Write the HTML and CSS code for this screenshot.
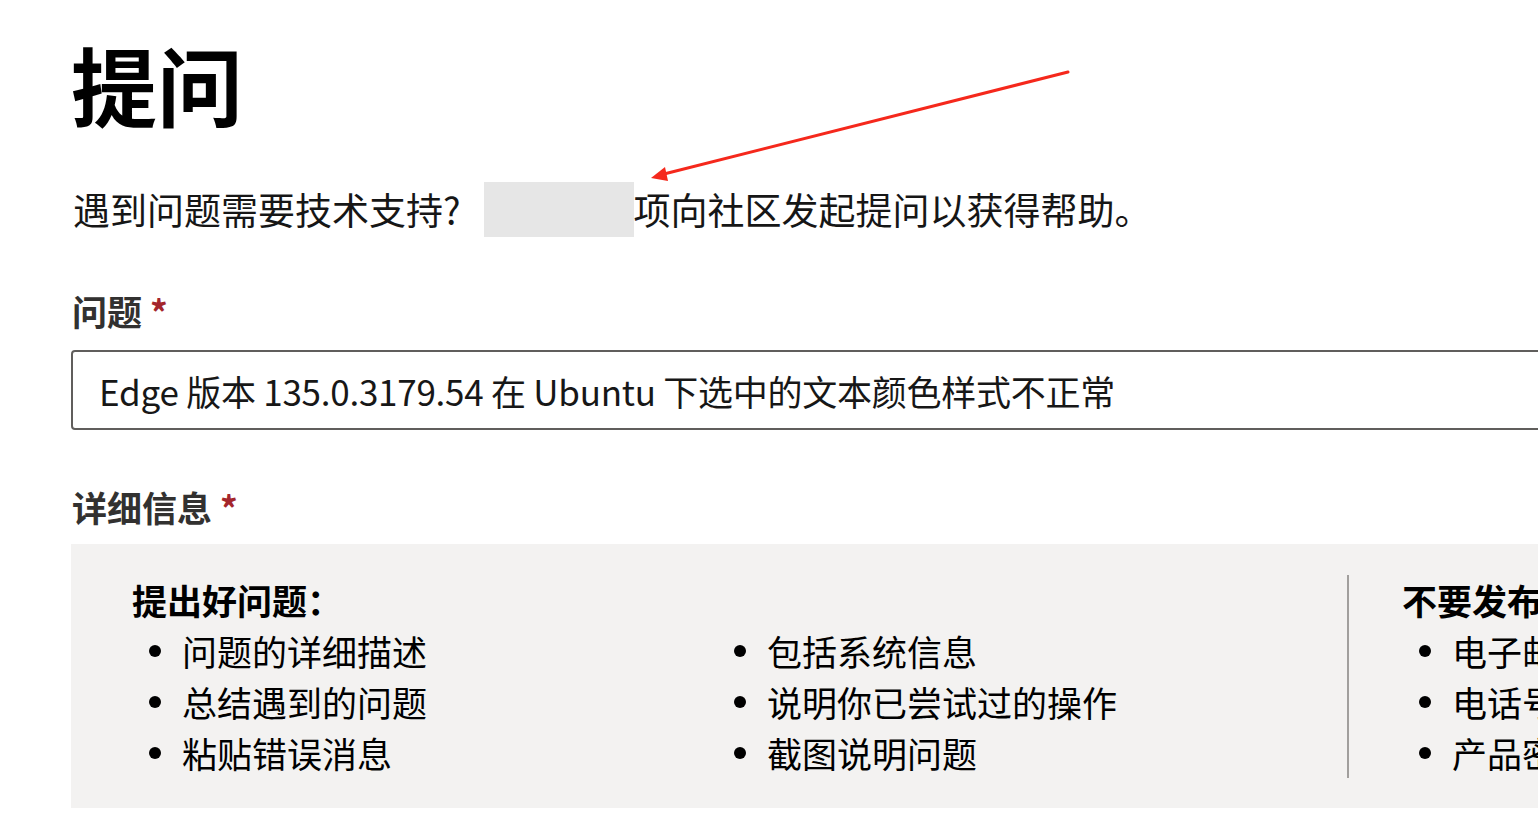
FILE: index.html
```html
<!DOCTYPE html>
<html lang="zh-CN">

<head>
 <meta charset="UTF-8">
 <meta name="viewport" content="width=device-width">
 <title>提问</title>
 <link rel="stylesheet" href="styles.css">
</head>

<body>

 <main class="page">

  <h1 class="page-title">提问</h1>

  <p class="intro">遇到问题需要技术支持?<span class="redacted"></span>项向社区发起提问以获得帮助。</p>

  <form class="ask-form">

   <label class="field-label" for="titulo">问题 <span class="required">*</span></label>
   <input id="titulo" class="text-input" value="Edge 版本 135.0.3179.54 在 Ubuntu 下选中的文本颜色样式不正常">

   <div class="field-label">详细信息 <span class="required">*</span></div>

   <div class="tips">
    <section class="tips-good">
     <h2 class="tips-title">提出好问题：</h2>
     <div class="tips-columns">
      <ul class="tips-list">
       <li>问题的详细描述</li>
       <li>总结遇到的问题</li>
       <li>粘贴错误消息</li>
      </ul>
      <ul class="tips-list">
       <li>包括系统信息</li>
       <li>说明你已尝试过的操作</li>
       <li>截图说明问题</li>
      </ul>
     </div>
    </section>
    <section class="tips-bad">
     <h2 class="tips-title">不要发布个人信息：</h2>
     <ul class="tips-list">
      <li>电子邮件地址</li>
      <li>电话号码</li>
      <li>产品密钥</li>
     </ul>
    </section>
   </div>

  </form>

 </main>

 <!-- Flecha roja de la anotación -->
 <svg class="annotation" width="1538" height="832" viewBox="0 0 1538 832">
  <line x1="1068" y1="72" x2="660" y2="175" stroke="#f5281c" stroke-width="3" stroke-linecap="round"/>
  <polygon points="651,178 665,167 668,181" fill="#f5281c"/>
 </svg>

</body>

</html>
```

FILE: styles.css
```css
/* Configuración básica */
* {
    margin: 0;
    padding: 0;
    box-sizing: border-box;
}

html,
body {
    overflow: hidden;
}

body {
    background-color: #ffffff;
    color: #161616;
    font-family: "Noto Sans CJK SC", sans-serif;
    width: 1538px;
    height: 832px;
    position: relative;
}

.page {
    padding-left: 72px;
    width: 1800px;
}

.page-title {
    font-size: 86px;
    font-weight: bold;
    line-height: 100px;
    color: #000000;
    margin-top: 34px;
    margin-left: -1px;
}

.intro {
    font-size: 37px;
    line-height: 55px;
    margin-top: 48px;
    display: flex;
    align-items: center;
    margin-left: 1px;
}

.redacted {
    display: inline-block;
    width: 150px;
    height: 55px;
    background-color: #e6e6e6;
    margin-left: 23px;
}

/* Formulario */
.ask-form {
    display: flex;
    flex-direction: column;
    width: 1700px;
    margin-left: -1px;
}

.field-label {
    display: block;
    font-size: 35px;
    font-weight: bold;
    line-height: 45px;
    color: #323130;
    margin-top: 51px;
    margin-left: 1px;
}

.text-input + .field-label {
    margin-top: 54px;
}

.required {
    color: #a4262c;
    font-weight: bold;
}

.text-input {
    margin-top: 17px;
    height: 80px;
    padding: 0 26px;
    font: inherit;
    font-size: 35px;
    letter-spacing: -0.25px;
    color: #171717;
    border: 2px solid #605e5c;
    border-radius: 4px;
    outline: none;
}

/* Caja de consejos */
.tips {
    margin-top: 15px;
    background-color: #f3f2f1;
    padding: 31px 0 30px;
    display: flex;
}

.tips-good {
    padding: 0 45px 0 61px;
}

.tips-bad {
    border-left: 2px solid #a19f9d;
    padding-left: 53px;
}

.tips-title {
    font-size: 35px;
    font-weight: bold;
    line-height: 50px;
    color: #000000;
}

.tips-columns {
    display: grid;
    grid-template-columns: 585px 585px;
}

.tips-list {
    list-style: none;
}

.tips-list li {
    position: relative;
    padding-left: 50px;
    font-size: 35px;
    line-height: 51px;
    color: #000000;
    white-space: nowrap;
}

.tips-list li::before {
    content: "";
    position: absolute;
    left: 17px;
    top: 20px;
    width: 12px;
    height: 12px;
    border-radius: 50%;
    background-color: #000000;
}

/* Anotación */
.annotation {
    position: absolute;
    top: 0;
    left: 0;
    pointer-events: none;
}
```
